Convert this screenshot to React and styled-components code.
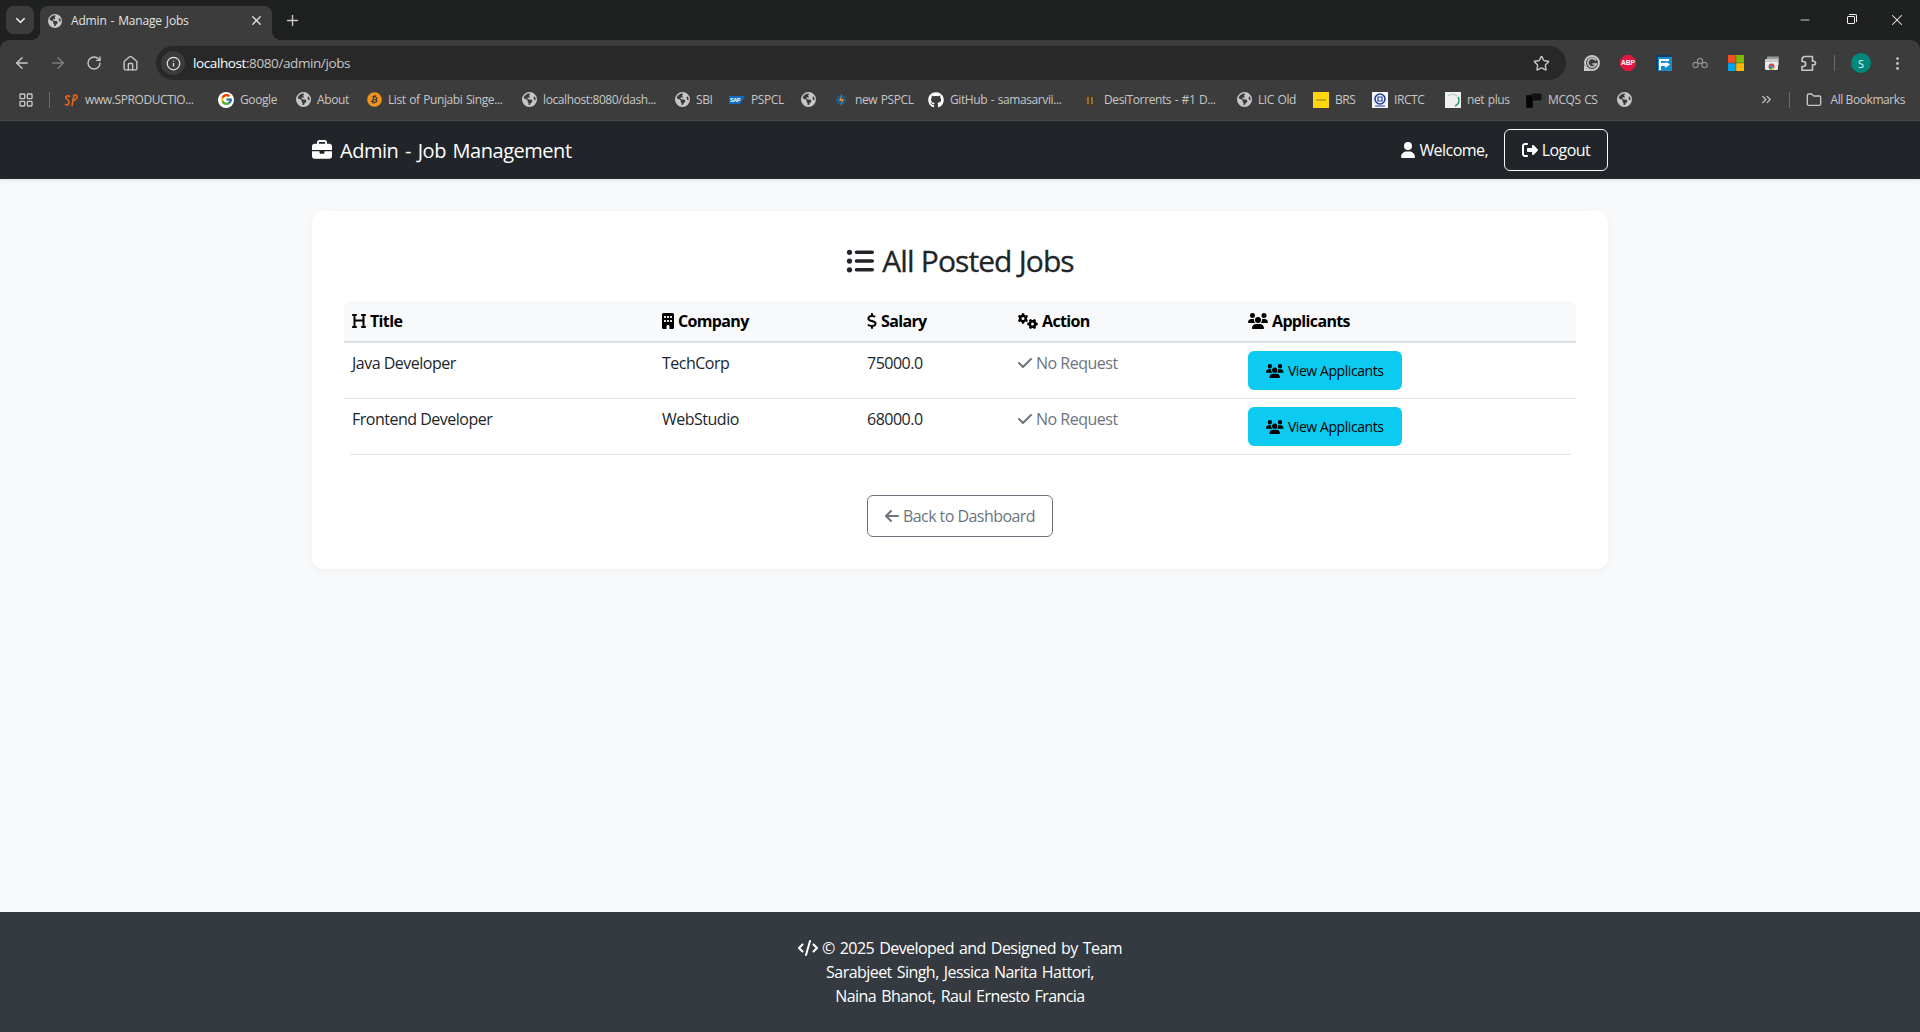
import React from "react";
import styled, { createGlobalStyle } from "styled-components";
import { ArrowLeft, ArrowRight, RotateCw, Home, Info, Star, EllipsisVertical, ChevronDown, X, Plus, Minus, LayoutGrid, ChevronsRight, Folder } from "lucide-react";
import { FaBriefcase, FaUser, FaRightFromBracket, FaListUl, FaHeading, FaBuilding, FaDollarSign, FaGears, FaUsers, FaCheck, FaArrowLeft, FaCode, FaEarthAmericas, FaGithub, FaBitcoin } from "react-icons/fa6";
import { FcGoogle } from "react-icons/fc";

const UI = `"Open Sans", "Noto Sans", "Liberation Sans", sans-serif`;

const Global = createGlobalStyle`
  html, body { margin: 0; padding: 0; background: #f8f9fa; }
  * { box-sizing: border-box; }
  body { font-family: ${UI}; }
`;

const Page = styled.div`
  width: 1920px;
  height: 1032px;
  display: flex;
  flex-direction: column;
  overflow: hidden;
  background: #f8f9fa;
`;

/* Font Awesome glyph box: width follows the icon's own ratio, as an <i> would */
const Glyph = styled.span`
  display: inline-flex;
  flex: none;
  width: ${(p) => p.$s * (p.$r || 1)}px;
  height: ${(p) => p.$s}px;
  svg {
    width: 100%;
    height: 100%;
    display: block;
  }
`;

/* Browser chrome */
const Chrome = styled.div`
  background: #1f2020;
  flex: none;
`;
const TabStrip = styled.div`
  height: 40px;
  display: flex;
  align-items: flex-end;
  padding-left: 6px;
`;
const TabMenu = styled.div`
  width: 28px;
  height: 28px;
  margin-bottom: 6px;
  border-radius: 8px;
  background: #3c3c3c;
  color: #e3e3e3;
  display: flex;
  align-items: center;
  justify-content: center;
`;
const Tab = styled.div`
  width: 232px;
  height: 34px;
  margin-left: 6px;
  background: #3c3c3c;
  border-radius: 8px 8px 0 0;
  display: flex;
  align-items: center;
  padding: 0 8px 5px;
  color: #e3e3e3;
  font-size: 12px;
  letter-spacing: -0.17px;
  word-spacing: 1px;
  position: relative;
  &::before,
  &::after {
    content: "";
    position: absolute;
    bottom: 0;
    width: 8px;
    height: 8px;
  }
  &::before {
    left: -8px;
    background: radial-gradient(circle at 0 0, transparent 7.5px, #3c3c3c 8px);
  }
  &::after {
    right: -8px;
    background: radial-gradient(circle at 100% 0, transparent 7.5px, #3c3c3c 8px);
  }
`;
const TabTitle = styled.span`
  flex: 1;
  margin-left: 9px;
`;
const NewTab = styled.div`
  width: 28px;
  height: 28px;
  margin: 0 0 6px 6px;
  color: #c7c7c7;
  display: flex;
  align-items: center;
  justify-content: center;
`;
const WindowControls = styled.div`
  margin-left: auto;
  align-self: flex-start;
  display: flex;
  height: 40px;
`;
const WindowButton = styled.div`
  width: 46px;
  display: flex;
  align-items: center;
  justify-content: center;
  color: #f0f0f0;
`;
const RestoreGlyph = styled.div`
  width: 8px;
  height: 8px;
  border: 1px solid #f0f0f0;
  border-radius: 1px;
  position: relative;
  &::after {
    content: "";
    position: absolute;
    top: -3px;
    right: -3px;
    width: 7px;
    height: 7px;
    border-top: 1px solid #f0f0f0;
    border-right: 1px solid #f0f0f0;
    border-top-right-radius: 2px;
  }
`;
const Toolbar = styled.div`
  height: 40px;
  background: #3c3c3c;
  border-radius: 9px 9px 0 0;
  display: flex;
  align-items: flex-start;
  padding: 6px 4px 0;
`;
const ToolButton = styled.div`
  width: 36px;
  height: 34px;
  display: flex;
  align-items: center;
  justify-content: center;
  color: ${(p) => p.$color || "#c7c7c7"};
`;
const Omnibox = styled.div`
  width: 1410px;
  height: 34px;
  margin: 0 8px;
  border-radius: 17px;
  background: #282828;
  display: flex;
  align-items: center;
  padding: 0 5px;
  color: #e3e3e3;
  font-size: 13.5px;
  letter-spacing: -0.4px;
`;
const InfoChip = styled.div`
  width: 24px;
  height: 24px;
  border-radius: 12px;
  background: #3c3c3c;
  display: flex;
  align-items: center;
  justify-content: center;
  margin-right: 8px;
  color: #e3e3e3;
`;
const UrlHost = styled.span`
  color: #ffffff;
`;
const UrlPath = styled.span`
  color: #c7c7c7;
`;
const OmniEnd = styled.div`
  margin-left: auto;
  margin-right: 11px;
  display: flex;
  color: #c7c7c7;
`;
const Divider = styled.div`
  width: 1px;
  height: ${(p) => p.$h || 16}px;
  background: #6a6a6a;
  margin: ${(p) => p.$m || "9px 8px"};
  flex: none;
`;
const Avatar = styled.div`
  width: 20px;
  height: 20px;
  border-radius: 50%;
  background: #00897b;
  color: #e8f5f3;
  font-size: 11px;
  display: flex;
  align-items: center;
  justify-content: center;
`;
const BookmarkBar = styled.div`
  height: 41px;
  background: #3c3c3c;
  border-bottom: 1px solid #4a4a4a;
  display: flex;
  align-items: center;
  padding: 0 0 1px 8px;
  color: #c7c7c7;
`;
const BookmarkItem = styled.div`
  width: ${(p) => p.$w}px;
  flex: none;
  display: flex;
  align-items: center;
  gap: 6px;
  font-size: 12px;
  letter-spacing: -0.4px;
  word-spacing: 0.8px;
  white-space: nowrap;
  overflow: hidden;
`;
const BookmarkIcon = styled.span`
  width: 16px;
  height: 16px;
  flex: none;
  display: flex;
  align-items: center;
  justify-content: center;
  color: #c7c7c7;
`;
const BookmarkEnd = styled.div`
  margin-left: auto;
  display: flex;
  align-items: center;
  padding-right: 15px;
  font-size: 12px;
  letter-spacing: -0.42px;
  white-space: nowrap;
`;
const FolderLabel = styled.span`
  margin-left: 8px;
`;

/* App nav */
const Nav = styled.nav`
  height: 58px;
  background: #212529;
  box-shadow: 0 2px 4px rgba(0, 0, 0, 0.08);
  flex: none;
  position: relative;
`;
const Container = styled.div`
  width: 1320px;
  margin: 0 auto;
  padding: 0 12px;
`;
const NavInner = styled(Container)`
  height: 58px;
  display: flex;
  align-items: center;
  justify-content: space-between;
  color: #fff;
`;
const Brand = styled.div`
  display: flex;
  align-items: center;
  gap: 8px;
  font-size: 20px;
  letter-spacing: -0.48px;
  word-spacing: 2px;
`;
const NavRight = styled.div`
  display: flex;
  align-items: center;
  font-size: 16px;
  letter-spacing: -0.55px;
`;
const Welcome = styled.span`
  display: flex;
  align-items: center;
  gap: 4px;
  margin-right: 16px;
`;
const LogoutButton = styled.div`
  height: 42px;
  width: 104px;
  border: 1px solid #f8f9fa;
  border-radius: 6px;
  display: flex;
  align-items: center;
  justify-content: center;
  gap: 4px;
`;

/* Main */
const Main = styled.main`
  flex: 1;
  padding-top: 32px;
`;
const Card = styled.section`
  background: #fff;
  border-radius: 12px;
  box-shadow: 0 2px 10px rgba(0, 0, 0, 0.04);
  padding: 30px 32px 32px;
  height: 358px;
`;
const Heading = styled.h2`
  margin: 0 0 20px;
  height: 40px;
  font-size: 30px;
  line-height: 36px;
  font-weight: 500;
  color: #212529;
  letter-spacing: -0.95px;
  word-spacing: 0.4px;
  -webkit-text-stroke: 0.3px #212529;
  display: flex;
  justify-content: center;
  align-items: center;
  gap: 8px;
`;
const Table = styled.table`
  width: 1232px;
  border-collapse: separate;
  border-spacing: 0;
  table-layout: fixed;
  font-size: 16px;
  color: #212529;
`;
const HeadRow = styled.tr`
  background: #f8f9fa;
`;
const Th = styled.th`
  height: 42px;
  padding: 2px 8px 0;
  text-align: left;
  font-weight: 700;
  color: #000;
  font-size: 16px;
  letter-spacing: -0.65px;
  border-bottom: 2px solid #dee2e6;
  &:first-child { border-top-left-radius: 8px; }
  &:last-child { border-top-right-radius: 8px; }
`;
const ThInner = styled.span`
  display: inline-flex;
  align-items: center;
  gap: 4px;
`;
const Td = styled.td`
  height: ${(p) => (p.$last ? 55 : 56)}px;
  padding: 8px;
  vertical-align: top;
  letter-spacing: -0.5px;
  line-height: 24px;
  border-bottom: ${(p) => (p.$last ? "none" : "1px solid #dee2e6")};
`;
const StatusText = styled.span`
  display: inline-flex;
  align-items: center;
  gap: 4px;
  color: #6c757d;
`;
const ViewButton = styled.div`
  width: 154px;
  height: 39px;
  background: #0dcaf0;
  color: #000;
  border-radius: 6px;
  font-size: 14px;
  letter-spacing: -0.42px;
  display: flex;
  align-items: center;
  justify-content: center;
  gap: 4px;
`;
const LastRule = styled.div`
  height: 1px;
  background: #dee2e6;
  margin: 0 5px 0 6px;
`;
const BackRow = styled.div`
  display: flex;
  justify-content: center;
  margin-top: 40px;
`;
const BackButton = styled.div`
  width: 186px;
  height: 42px;
  border: 1px solid #6c757d;
  border-radius: 6px;
  color: #6c757d;
  font-size: 16px;
  letter-spacing: -0.55px;
  display: flex;
  align-items: center;
  justify-content: center;
  gap: 4px;
`;

/* Footer */
const Footer = styled.footer`
  height: 120px;
  flex: none;
  background: #343a40;
  color: #fff;
  font-size: 16px;
  letter-spacing: -0.55px;
  word-spacing: 1.4px;
  line-height: 24px;
  padding-top: 24px;
  text-align: center;
`;
const FooterLead = styled.span`
  display: inline-flex;
  align-items: center;
  gap: 4px;
  vertical-align: top;
  height: 24px;
`;

/* Small logos */
const GoogleDisc = styled.span`
  width: 16px;
  height: 16px;
  border-radius: 50%;
  background: #fff;
  display: flex;
  align-items: center;
  justify-content: center;
`;

const SpLogo = () => (
  <svg width="16" height="16" viewBox="0 0 16 16" fill="none" stroke="#e8651f" strokeWidth="1.6">
    <path d="M7 5C5 3 2 4 3 6s4 2 3 5-3 2-4 1" />
    <path d="M9 14l2-11c3-1 4 2 2 4s-4 1-4 1" />
  </svg>
);
const SapLogo = () => (
  <svg width="16" height="16" viewBox="0 0 16 16">
    <path d="M0 4h16l-5 8H0z" fill="#0f6fc0" />
    <text x="1" y="10" fontSize="5.5" fontWeight="700" fill="#fff" fontFamily="Liberation Sans">SAP</text>
  </svg>
);
const BoltLogo = () => (
  <svg width="16" height="16" viewBox="0 0 16 16">
    <circle cx="8" cy="8" r="5" fill="#1c5a8c" />
    <path d="M9 1L6 9h3l-2 6 4-8H8z" fill="#e8891f" />
  </svg>
);
const DesiLogo = () => (
  <svg width="16" height="16" viewBox="0 0 16 16">
    <rect x="4" y="3" width="8" height="11" rx="1" fill="#4a3a20" />
    <path d="M6 5v7M10 5v7" stroke="#a58a4f" strokeWidth="1.4" />
  </svg>
);
const BrsLogo = () => (
  <svg width="16" height="16" viewBox="0 0 16 16">
    <rect width="16" height="16" fill="#ffd50f" />
    <path d="M3 8h10" stroke="#8a7a1a" strokeWidth="1" />
  </svg>
);
const IrctcLogo = () => (
  <svg width="16" height="16" viewBox="0 0 16 16">
    <rect width="16" height="16" fill="#f4f6fb" />
    <circle cx="8" cy="7" r="5" fill="none" stroke="#1f3f9c" strokeWidth="1.6" />
    <path d="M6 5h4v4H6zM3 14h10" stroke="#1f3f9c" strokeWidth="1.2" fill="none" />
  </svg>
);
const NetLogo = () => (
  <svg width="16" height="16" viewBox="0 0 16 16">
    <rect width="16" height="16" fill="#eef1ee" />
    <path d="M3 4a7 7 0 0 1 9 0" stroke="#b8cfc0" strokeWidth="1.4" fill="none" />
    <path d="M13 5a6 6 0 0 1-3 9" stroke="#2f9a6b" strokeWidth="1.6" fill="none" />
  </svg>
);
const McqsLogo = () => (
  <svg width="16" height="16" viewBox="0 0 16 16">
    <rect x="5" y="1" width="11" height="8" fill="#111" stroke="#555" strokeWidth=".6" />
    <rect x="0" y="3" width="7" height="13" rx="1" fill="#050505" stroke="#333" strokeWidth=".5" />
  </svg>
);
const GrammarlyIcon = () => (
  <svg width="18" height="18" viewBox="0 0 18 18" fill="none">
    <circle cx="9" cy="9" r="7" stroke="#c7c7c7" strokeWidth="2" />
    <path d="M13 6.5A4.4 4.4 0 1 0 13.4 10H9.5" stroke="#c7c7c7" strokeWidth="1.6" />
    <path d="M2 12v4h5" stroke="#c7c7c7" strokeWidth="2" />
  </svg>
);
const AbpIcon = () => (
  <svg width="16" height="16" viewBox="0 0 16 16">
    <path d="M5 0h6l5 5v6l-5 5H5l-5-5V5z" fill="#e0173f" />
    <text x="8" y="10.4" textAnchor="middle" fontSize="6.6" fontWeight="700" fill="#fff" fontFamily="Liberation Sans">ABP</text>
  </svg>
);
const FormIcon = () => (
  <svg width="16" height="16" viewBox="0 0 16 16">
    <rect width="16" height="16" rx="1" fill="#0f3f66" />
    <rect x="2" y="2" width="14" height="14" fill="#178ecb" />
    <path d="M3 4h10v2H5v2h6l-2-2 5 3.5L9 13v-2H5v4H3z" fill="#fff" />
  </svg>
);
const LinkIcon = () => (
  <svg width="16" height="16" viewBox="0 0 16 16" fill="none" stroke="#8f8f8f" strokeWidth="1.2">
    <circle cx="3.5" cy="10" r="2.6" />
    <circle cx="8" cy="6" r="2.6" />
    <circle cx="12.5" cy="10" r="2.6" />
  </svg>
);
const MsIcon = () => (
  <svg width="16" height="16" viewBox="0 0 16 16">
    <rect width="7.8" height="7.8" fill="#f25022" />
    <rect x="8.2" width="7.8" height="7.8" fill="#7fba00" />
    <rect y="8.2" width="7.8" height="7.8" fill="#00a4ef" />
    <rect x="8.2" y="8.2" width="7.8" height="7.8" fill="#ffb900" />
  </svg>
);
const TabsIcon = () => (
  <svg width="16" height="16" viewBox="0 0 16 16">
    <rect x="3" y="1.5" width="12" height="9" rx="1" fill="#9a9a9a" />
    <rect x="1" y="4" width="13" height="11" rx="1.5" fill="#e9e9e9" />
    <rect x="1" y="4" width="13" height="3" fill="#c9c9c9" />
    <circle cx="7.5" cy="11.5" r="3" fill="#db4437" />
    <path d="M7.5 11.5L5 13.2a3 3 0 0 0 2.6 1.3z" fill="#0f9d58" />
    <path d="M7.5 11.5l2.6 1.5a3 3 0 0 1-2.6 1.5z" fill="#f4b400" />
    <circle cx="7.5" cy="11.5" r="1.2" fill="#4285f4" />
  </svg>
);
const ExtensionIcon = () => (
  <svg width="18" height="18" viewBox="0 0 18 18" fill="none" stroke="#c7c7c7" strokeWidth="1.6" strokeLinejoin="round">
    <path d="M6 2.5h7.5v4.7h1.2a1.8 1.8 0 0 1 0 3.6h-1.2v5.4H3v-3.7h1.2a2.5 2.5 0 0 0 0-5H3V5.5a3 3 0 0 1 3-3z" />
  </svg>
);

const Globe = () => <FaEarthAmericas size={15} />;

const bookmarks = [
  { w: 155, label: "www.SPRODUCTIO...", icon: <SpLogo /> },
  { w: 77, label: "Google", icon: <GoogleDisc><FcGoogle size={13} /></GoogleDisc> },
  { w: 71, label: "About", icon: <Globe /> },
  { w: 155, label: "List of Punjabi Singe...", icon: <FaBitcoin size={15} color="#f7931a" /> },
  { w: 153, label: "localhost:8080/dash...", icon: <Globe /> },
  { w: 55, label: "SBI", icon: <Globe /> },
  { w: 71, label: "PSPCL", icon: <SapLogo /> },
  { w: 33, label: "", icon: <Globe /> },
  { w: 95, label: "new PSPCL", icon: <BoltLogo /> },
  { w: 154, label: "GitHub - samasarvii...", icon: <FaGithub size={16} color="#fff" /> },
  { w: 154, label: "DesiTorrents - #1 D...", icon: <DesiLogo /> },
  { w: 77, label: "LIC Old", icon: <Globe /> },
  { w: 59, label: "BRS", icon: <BrsLogo /> },
  { w: 73, label: "IRCTC", icon: <IrctcLogo /> },
  { w: 81, label: "net plus", icon: <NetLogo /> },
  { w: 90, label: "MCQS CS", icon: <McqsLogo /> },
  { w: 24, label: "", icon: <Globe /> },
];

const jobs = [
  { title: "Java Developer", company: "TechCorp", salary: "75000.0" },
  { title: "Frontend Developer", company: "WebStudio", salary: "68000.0" },
];

export default function App() {
  return (
    <>
      <Global />
      <Page>
        <Chrome>
          <TabStrip>
            <TabMenu><ChevronDown size={15} strokeWidth={2.4} /></TabMenu>
            <Tab>
              <FaEarthAmericas size={14} color="#c7c7c7" />
              <TabTitle>Admin - Manage Jobs</TabTitle>
              <X size={15} />
            </Tab>
            <NewTab><Plus size={17} /></NewTab>
            <WindowControls>
              <WindowButton><Minus size={14} strokeWidth={1.4} /></WindowButton>
              <WindowButton><RestoreGlyph /></WindowButton>
              <WindowButton><X size={18} strokeWidth={1.4} /></WindowButton>
            </WindowControls>
          </TabStrip>
          <Toolbar>
            <ToolButton><ArrowLeft size={18} /></ToolButton>
            <ToolButton $color="#7b7b7b"><ArrowRight size={18} /></ToolButton>
            <ToolButton><RotateCw size={16} /></ToolButton>
            <ToolButton><Home size={17} /></ToolButton>
            <Omnibox>
              <InfoChip><Info size={15} /></InfoChip>
              <UrlHost>localhost</UrlHost>
              <UrlPath>:8080/admin/jobs</UrlPath>
              <OmniEnd><Star size={17} /></OmniEnd>
            </Omnibox>
            <ToolButton><GrammarlyIcon /></ToolButton>
            <ToolButton><AbpIcon /></ToolButton>
            <ToolButton><FormIcon /></ToolButton>
            <ToolButton><LinkIcon /></ToolButton>
            <ToolButton><MsIcon /></ToolButton>
            <ToolButton><TabsIcon /></ToolButton>
            <ToolButton><ExtensionIcon /></ToolButton>
            <Divider />
            <ToolButton><Avatar>S</Avatar></ToolButton>
            <ToolButton><EllipsisVertical size={17} /></ToolButton>
          </Toolbar>
          <BookmarkBar>
            <ToolButton><LayoutGrid size={16} /></ToolButton>
            <Divider $m="0 13px 0 5px" />
            {bookmarks.map((b, i) => (
              <BookmarkItem key={i} $w={b.w}>
                <BookmarkIcon>{b.icon}</BookmarkIcon>
                {b.label && <span>{b.label}</span>}
              </BookmarkItem>
            ))}
            <BookmarkEnd>
              <ChevronsRight size={15} />
              <Divider $m="0 16px 0 15px" />
              <Folder size={16} />
              <FolderLabel>All Bookmarks</FolderLabel>
            </BookmarkEnd>
          </BookmarkBar>
        </Chrome>

        <Nav>
          <NavInner>
            <Brand><Glyph $s={20}><FaBriefcase /></Glyph>Admin - Job Management</Brand>
            <NavRight>
              <Welcome><Glyph $s={16} $r={0.875}><FaUser /></Glyph>Welcome,</Welcome>
              <LogoutButton><Glyph $s={16}><FaRightFromBracket /></Glyph>Logout</LogoutButton>
            </NavRight>
          </NavInner>
        </Nav>

        <Main>
          <Container>
            <Card>
              <Heading><Glyph $s={28}><FaListUl /></Glyph>All Posted Jobs</Heading>
              <Table>
                <colgroup>
                  <col width="310" />
                  <col width="205" />
                  <col width="151" />
                  <col width="230" />
                  <col width="336" />
                </colgroup>
                <thead>
                  <HeadRow>
                    <Th><ThInner><Glyph $s={16} $r={0.875}><FaHeading /></Glyph>Title</ThInner></Th>
                    <Th><ThInner><Glyph $s={16} $r={0.75}><FaBuilding /></Glyph>Company</ThInner></Th>
                    <Th><ThInner><Glyph $s={16} $r={0.625}><FaDollarSign /></Glyph>Salary</ThInner></Th>
                    <Th><ThInner><Glyph $s={16} $r={1.25}><FaGears /></Glyph>Action</ThInner></Th>
                    <Th><ThInner><Glyph $s={16} $r={1.25}><FaUsers /></Glyph>Applicants</ThInner></Th>
                  </HeadRow>
                </thead>
                <tbody>
                  {jobs.map((j, i) => {
                    const last = i === jobs.length - 1;
                    return (
                      <tr key={j.title}>
                        <Td $last={last}>{j.title}</Td>
                        <Td $last={last}>{j.company}</Td>
                        <Td $last={last}>{j.salary}</Td>
                        <Td $last={last}><StatusText><Glyph $s={16} $r={0.875}><FaCheck /></Glyph>No Request</StatusText></Td>
                        <Td $last={last}><ViewButton><Glyph $s={14} $r={1.25}><FaUsers /></Glyph>View Applicants</ViewButton></Td>
                      </tr>
                    );
                  })}
                </tbody>
              </Table>
              <LastRule />
              <BackRow>
                <BackButton><Glyph $s={16} $r={0.875}><FaArrowLeft /></Glyph>Back to Dashboard</BackButton>
              </BackRow>
            </Card>
          </Container>
        </Main>

        <Footer>
          <FooterLead><Glyph $s={16} $r={1.25}><FaCode /></Glyph>© 2025 Developed and Designed by Team</FooterLead>
          <br />
          Sarabjeet Singh, Jessica Narita Hattori,
          <br />
          Naina Bhanot, Raul Ernesto Francia
        </Footer>
      </Page>
    </>
  );
}
